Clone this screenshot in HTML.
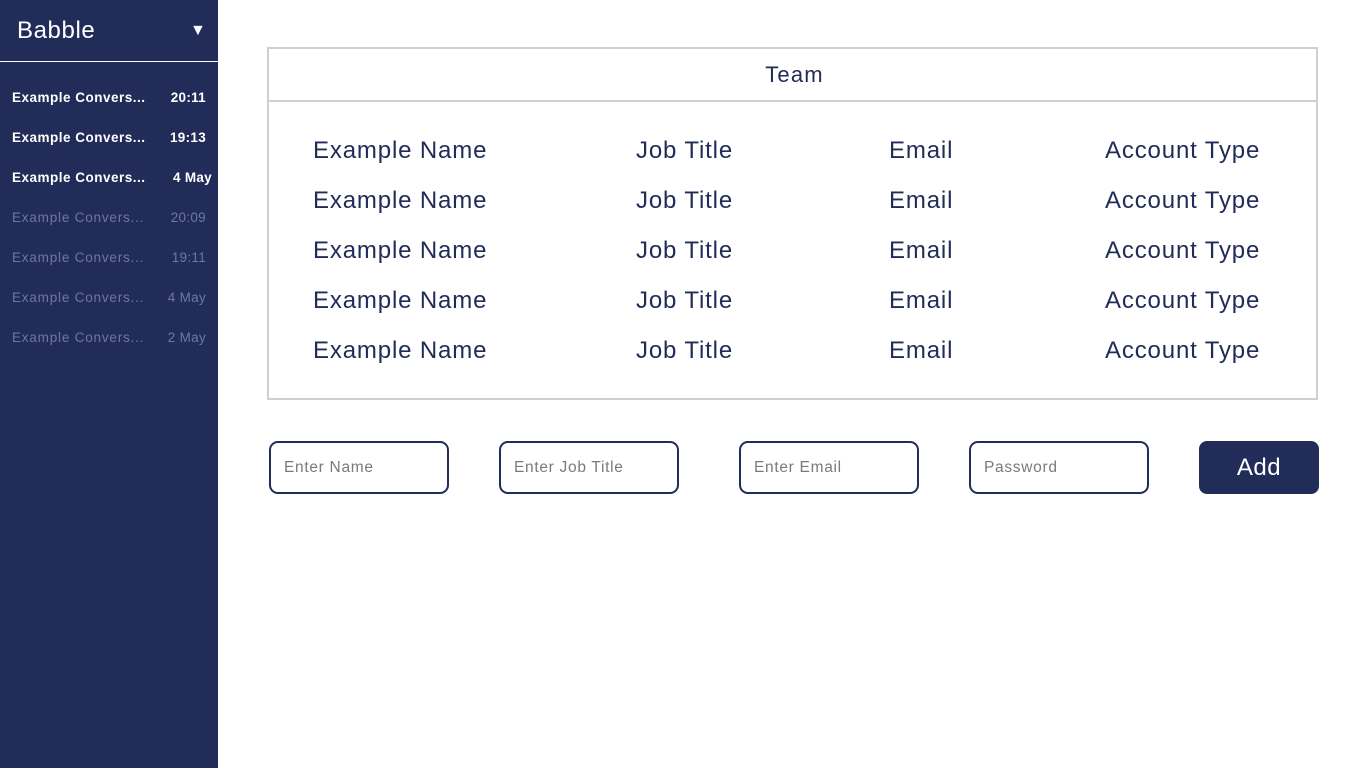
<!DOCTYPE html>
<html><head><meta charset="utf-8"><style>
*{box-sizing:border-box;margin:0;padding:0}
body{width:1366px;height:768px;background:#fff;font-family:"Liberation Sans",sans-serif;position:relative;overflow:hidden}
.side{position:absolute;left:0;top:0;width:218px;height:768px;background:#212c59}
.brand{position:absolute;left:17px;top:17px;color:#fff;font-size:24px;letter-spacing:0.6px}
.arrow{position:absolute;left:190px;top:22px;color:#fff;font-size:16px}
.hr{position:absolute;left:0;top:61px;width:218px;height:1px;background:#fff}
.conv{position:absolute;left:12px;width:200px;font-size:13.5px;font-weight:bold;color:#fff;letter-spacing:0.5px}
.conv span{position:absolute;right:6px;letter-spacing:0.3px}
.conv.dim{color:#6d77a0;font-weight:normal;letter-spacing:0.8px}
.box{position:absolute;left:267px;top:47px;width:1051px;height:353px;border:2px solid #cfcfcf}
.head{height:53px;border-bottom:2px solid #cfcfcf;text-align:center;line-height:52px;font-size:22px;color:#212c59;letter-spacing:1.2px;padding-left:4px}
.c{position:absolute;font-size:24px;color:#212c59;letter-spacing:0.85px;top:1px}
.in{position:absolute;top:441px;width:180px;height:53px;border:2px solid #212c59;border-radius:9px;font-size:15.5px;color:#7a7a7a;padding-left:13px;line-height:49px;letter-spacing:0.7px}
.btn{position:absolute;left:1199px;top:441px;width:120px;height:53px;background:#212c59;border-radius:8px;color:#fff;font-size:24px;text-align:center;line-height:53px;letter-spacing:0.5px}
</style></head><body>
<div class="side">
<div class="brand">Babble</div><div class="arrow">▼</div><div class="hr"></div>
<div class="conv" style="top:90px">Example Convers...<span>20:11</span></div>
<div class="conv" style="top:130px">Example Convers...<span>19:13</span></div>
<div class="conv" style="top:170px">Example Convers...<span style="right:0">4 May</span></div>
<div class="conv dim" style="top:210px">Example Convers...<span>20:09</span></div>
<div class="conv dim" style="top:250px">Example Convers...<span>19:11</span></div>
<div class="conv dim" style="top:290px">Example Convers...<span>4 May</span></div>
<div class="conv dim" style="top:330px">Example Convers...<span>2 May</span></div>
</div>
<div class="box"><div class="head">Team</div></div>
<div class="c" style="left:313px;margin-top:136px">Example Name</div><div class="c" style="left:636px;margin-top:136px">Job Title</div><div class="c" style="left:889px;margin-top:136px">Email</div><div class="c" style="left:1105px;margin-top:136px">Account Type</div>
<div class="c" style="left:313px;margin-top:186px">Example Name</div><div class="c" style="left:636px;margin-top:186px">Job Title</div><div class="c" style="left:889px;margin-top:186px">Email</div><div class="c" style="left:1105px;margin-top:186px">Account Type</div>
<div class="c" style="left:313px;margin-top:236px">Example Name</div><div class="c" style="left:636px;margin-top:236px">Job Title</div><div class="c" style="left:889px;margin-top:236px">Email</div><div class="c" style="left:1105px;margin-top:236px">Account Type</div>
<div class="c" style="left:313px;margin-top:286px">Example Name</div><div class="c" style="left:636px;margin-top:286px">Job Title</div><div class="c" style="left:889px;margin-top:286px">Email</div><div class="c" style="left:1105px;margin-top:286px">Account Type</div>
<div class="c" style="left:313px;margin-top:336px">Example Name</div><div class="c" style="left:636px;margin-top:336px">Job Title</div><div class="c" style="left:889px;margin-top:336px">Email</div><div class="c" style="left:1105px;margin-top:336px">Account Type</div>
<div class="in" style="left:269px">Enter Name</div>
<div class="in" style="left:499px">Enter Job Title</div>
<div class="in" style="left:739px">Enter Email</div>
<div class="in" style="left:969px">Password</div>
<div class="btn">Add</div>
</body></html>
